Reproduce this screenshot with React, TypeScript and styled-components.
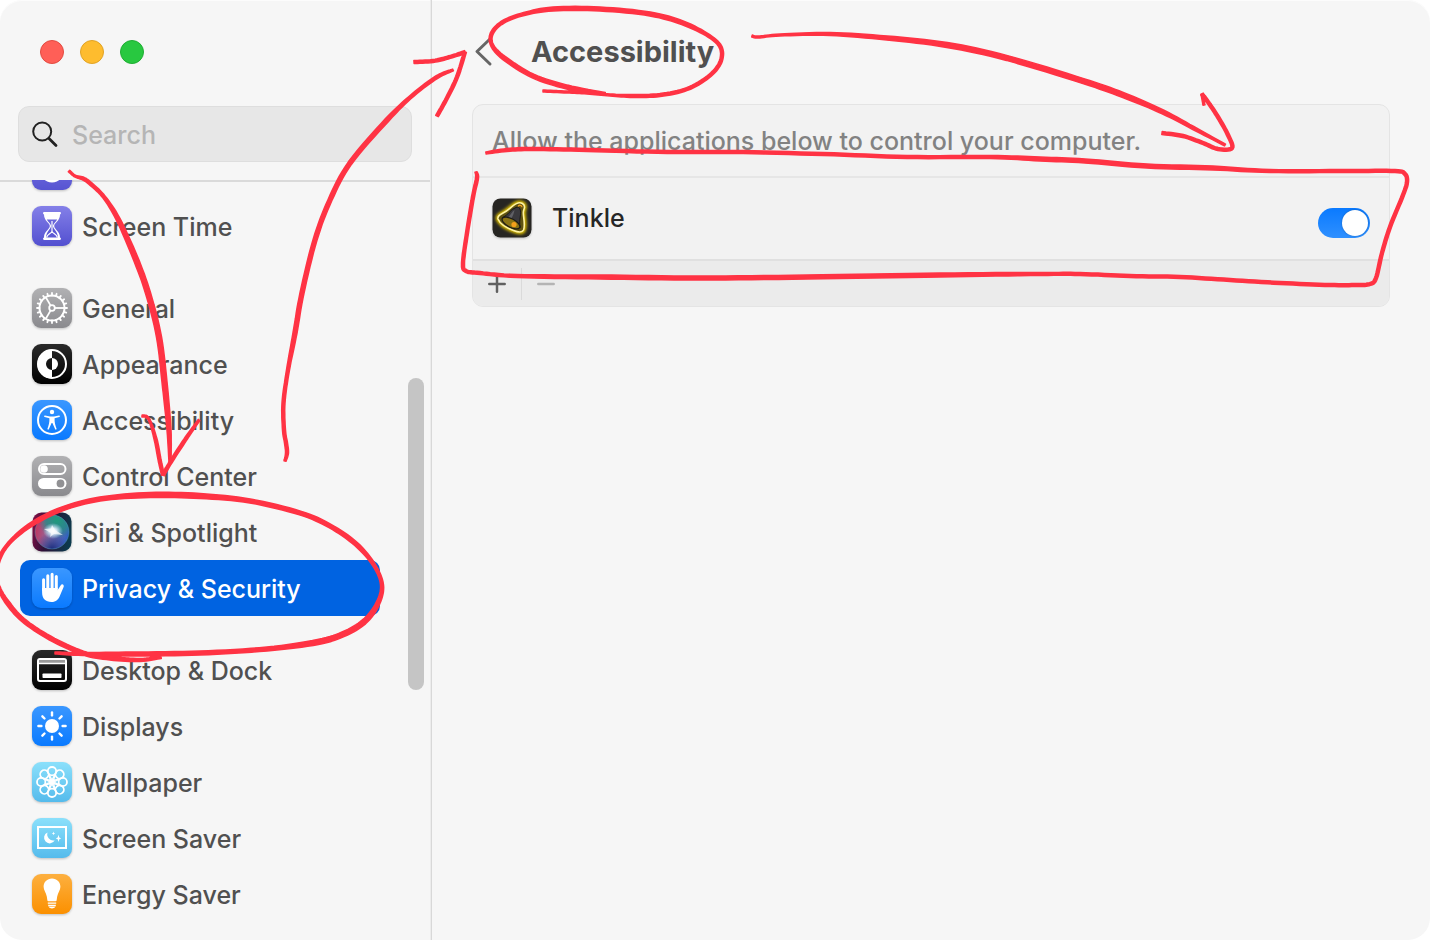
import React, { useId } from "react";
import styled, { createGlobalStyle, css } from "styled-components";

const GlobalStyle = createGlobalStyle`
  *, *::before, *::after { box-sizing: border-box; }
  body {
    margin: 0;
    background: #ffffff;
    font-family: Inter, "Liberation Sans", sans-serif;
    font-size: 25px;
    font-weight: 450;
    line-height: 32px;
    color: #505050;
    -webkit-font-smoothing: antialiased;
  }
  h1, p, ul { margin: 0; padding: 0; }
`;

const Window = styled.div`
  position: relative;
  display: flex;
  height: 100vh;
  min-height: 600px;
  border-radius: 22px;
  overflow: hidden;
  background: #f6f6f6;
  box-shadow: inset 0 1px 0 #fcfcfc;
`;

/* Sidebar */

const Sidebar = styled.aside`
  flex: 0 0 432px;
  display: flex;
  flex-direction: column;
  padding-right: 1px;
  border-right: 1px solid #d8d8d8;
  box-shadow: inset -1px 0 0 #ececec;
`;

const SidebarHeader = styled.header`
  padding: 40px 18px 18px;
  display: flex;
  flex-direction: column;
  gap: 42px;
`;

const TrafficLights = styled.div`
  display: flex;
  gap: 16px;
  padding-left: 22px;
`;

const Light = styled.button<{ $fill: string; $edge: string }>`
  width: 24px;
  height: 24px;
  padding: 0;
  border-radius: 50%;
  border: 1px solid ${(p) => p.$edge};
  background: ${(p) => p.$fill};
`;

const SearchBox = styled.label`
  display: flex;
  align-items: center;
  gap: 13px;
  width: 394px;
  height: 56px;
  padding: 0 12px;
  border: 1px solid #dedede;
  border-radius: 11px;
  background: #e7e7e7;
`;

const SearchInput = styled.input`
  flex: 1;
  min-width: 0;
  padding: 2px 0 0;
  border: 0;
  outline: 0;
  background: transparent;
  font: inherit;
  color: #262626;
  &::placeholder { color: #b5b5b5; opacity: 1; }
`;

const ListArea = styled.nav`
  position: relative;
  flex: 1;
  min-height: 0;
  overflow: hidden;
  background: linear-gradient(#dadada, #dadada) top / 100% 2px no-repeat;
`;

const List = styled.ul`
  list-style: none;
  margin-top: -38px;
  padding: 0 50px 0 20px;
  display: flex;
  flex-direction: column;
  gap: 26px;
`;

const Group = styled.ul`
  list-style: none;
`;

const ItemLink = styled.a<{ $selected?: boolean }>`
  display: flex;
  align-items: center;
  gap: 10px;
  height: 56px;
  padding: 0 12px;
  border-radius: 10px;
  color: inherit;
  text-decoration: none;
  white-space: nowrap;
  ${(p) => p.$selected && css`
    background: #0063e1;
    color: #ffffff;
  `}
`;

const ItemName = styled.span`
  padding-top: 2px;
`;

const Tile = styled.svg`
  flex: none;
  display: block;
  width: 40px;
  height: 40px;
  overflow: visible;
  filter: drop-shadow(0 1px 1px rgba(0, 0, 0, 0.22));
`;

const ScrollThumb = styled.div`
  position: absolute;
  top: 198px;
  right: 6px;
  width: 16px;
  height: 312px;
  border-radius: 8px;
  background: #c5c5c5;
`;

/* Main pane */

const Main = styled.main`
  flex: 1;
  min-width: 0;
  padding: 0 40px;
`;

const TitleBar = styled.header`
  display: flex;
  align-items: center;
  gap: 36px;
  height: 104px;
`;

const BackButton = styled.button`
  display: block;
  width: 23px;
  height: 32px;
  padding: 0;
  border: 0;
  background: none;
  svg { display: block; }
`;

const Title = styled.h1`
  font-size: 29px;
  line-height: 36px;
  font-weight: 650;
`;

const Panel = styled.section`
  border: 1px solid #e4e4e4;
  border-radius: 11px;
  background: #f2f2f2;
  overflow: hidden;
`;

const PanelIntro = styled.p`
  height: 73px;
  padding: 20px 19px;
  border-bottom: 2px solid #e6e6e6;
  color: #828282;
`;

const AppRow = styled.label`
  display: flex;
  align-items: center;
  gap: 20px;
  padding: 20px 19px 21px;
  border-bottom: 2px solid #e0e0e0;
  color: #262626;
`;

const AppName = styled.span`
  flex: 1;
`;

const Switch = styled.input`
  appearance: none;
  align-self: flex-end;
  display: flex;
  justify-content: flex-start;
  width: 52px;
  height: 30px;
  margin: 0;
  padding: 2px;
  border-radius: 15px;
  background: #cfcfcf;
  &::before {
    content: "";
    width: 26px;
    height: 26px;
    border-radius: 50%;
    background: #ffffff;
    box-shadow: 0 0 2px rgba(0, 0, 0, 0.3);
  }
  &:checked {
    justify-content: flex-end;
    background: linear-gradient(#0a7aff, #2f90ff);
  }
`;

const PanelFooter = styled.div`
  display: flex;
  align-items: center;
  height: 45px;
  background: #ebebeb;
`;

const FooterButton = styled.button<{ $tone: string }>`
  display: flex;
  align-items: center;
  justify-content: center;
  width: 48px;
  height: 32px;
  padding: 0;
  border: 0;
  background: none;
  color: ${(p) => p.$tone};
  & + & { border-left: 1px solid #dadada; }
`;

const Markup = styled.svg`
  position: absolute;
  top: 0;
  left: 0;
  width: 100%;
  height: auto;
  pointer-events: none;
`;

/* Icons */

type TileProps = { from: string; to: string; children?: React.ReactNode };

function IconTile({ from, to, children }: TileProps) {
  const id = useId();
  return (
    <Tile viewBox="0 0 40 40" aria-hidden="true">
      <defs>
        <linearGradient id={id} x1="0" y1="0" x2="0" y2="1">
          <stop offset="0" stopColor={from} />
          <stop offset="1" stopColor={to} />
        </linearGradient>
      </defs>
      <rect width="40" height="40" rx="9" fill={`url(#${id})`} />
      {children}
    </Tile>
  );
}

const around = (n: number, draw: (angle: number) => React.ReactNode) =>
  Array.from({ length: n }, (_, i) => draw((360 / n) * i));

const FocusIcon = () => (
  <IconTile from="#7d79e6" to="#5754d2">
    <circle cx="20" cy="20" r="12.500" fill="#fff" />
  </IconTile>
);

const ScreenTimeIcon = () => (
  <IconTile from="#8480e8" to="#5350d0">
    <path
      d="M12 6h16c1.300 0 1.300 2.300 0 2.400C28 15 22.200 16.500 22.200 20S28 25 28 31.600c1.300.1 1.300 2.400 0 2.400H12c-1.300 0-1.300-2.300 0-2.400C12 25 17.800 23.500 17.800 20S12 15 12 8.400C10.700 8.300 10.700 6 12 6Z"
      fill="#fff"
    />
    <path d="M14.800 13.500h10.400c-1.300 2.600-3.800 3.700-4.300 6.500h-1.800c-.5-2.800-3-3.900-4.300-6.500Z" fill="#6a66da" />
    <path d="M19.100 20h1.800c.6 3.700 4.700 5 5.100 11.500H14c.4-6.500 4.500-7.800 5.100-11.500Z" fill="#5d5ad5" />
    <path d="M20 15v11.500" stroke="#fff" strokeWidth="1.200" />
    <path d="M14.500 31.500c.8-3 3.500-3.700 5.500-5.700 2 2 4.700 2.700 5.500 5.700" fill="none" stroke="#fff" strokeWidth="1.200" />
  </IconTile>
);

const GeneralIcon = () => (
  <IconTile from="#b1b1b3" to="#8a8a8e">
    <g stroke="#fff" fill="none">
      <circle cx="20" cy="20" r="12.500" strokeWidth="2" />
      {around(20, (a) => (
        <path key={a} d="M20 7.500V5" strokeWidth="1.800" strokeLinecap="round" transform={`rotate(${a} 20 20)`} />
      ))}
      <circle cx="20" cy="20" r="2.800" strokeWidth="1.800" />
      {around(3, (a) => (
        <path key={a} d="M23 20h9" strokeWidth="1.800" transform={`rotate(${a} 20 20)`} />
      ))}
    </g>
  </IconTile>
);

const AppearanceIcon = () => (
  <IconTile from="#2a2a2a" to="#000000">
    <circle cx="20" cy="20" r="14" fill="none" stroke="#fff" strokeWidth="2" />
    <path d="M20 5.500a14.500 14.500 0 0 0 0 29v-8.500a6 6 0 0 1 0-12Z" fill="#fff" />
    <path d="M20 14a6 6 0 0 1 0 12Z" fill="#fff" />
  </IconTile>
);

const AccessibilityIcon = () => (
  <IconTile from="#3a97ff" to="#0a7aff">
    <circle cx="20" cy="20" r="14" fill="none" stroke="#fff" strokeWidth="2" />
    <circle cx="20" cy="12" r="2.200" fill="#fff" />
    <path
      d="M13 15.400 18 16.500h4l5-1.100c1-.2 1.300 1.200.3 1.500L22.600 18.300c-.3 3.500.8 7.400 1.900 10.300.4 1-.9 1.500-1.400.5L20.400 23h-.8l-2.700 6.100c-.5 1-1.800.5-1.400-.5 1.100-2.900 2.200-6.800 1.900-10.300L12.700 16.900c-1-.3-.7-1.700.3-1.500Z"
      fill="#fff"
    />
  </IconTile>
);

const ControlCenterIcon = () => (
  <IconTile from="#b1b1b3" to="#8a8a8e">
    <rect x="7" y="8" width="26.500" height="10" rx="5" fill="none" stroke="#fff" strokeWidth="2" />
    <circle cx="12" cy="13" r="3.800" fill="#fff" />
    <rect x="6" y="22" width="28.500" height="11" rx="5.500" fill="#fff" />
    <circle cx="28.500" cy="27.500" r="3.900" fill="#919194" />
  </IconTile>
);

function SiriIcon() {
  const id = useId();
  return (
    <Tile viewBox="0 0 40 40" aria-hidden="true">
      <defs>
        <linearGradient id={`${id}b`} x1="0" y1="0.300" x2="1" y2="0.500">
          <stop offset="0" stopColor="#7c0f45" />
          <stop offset="0.400" stopColor="#2c1038" />
          <stop offset="1" stopColor="#0c3a4c" />
        </linearGradient>
        <linearGradient id={`${id}o`} x1="0" y1="0.400" x2="1" y2="0.600">
          <stop offset="0" stopColor="#c2355f" />
          <stop offset="0.450" stopColor="#8d6fa0" />
          <stop offset="1" stopColor="#2c5fc4" />
        </linearGradient>
        <radialGradient id={`${id}g`} cx="0.650" cy="0.150" r="0.550">
          <stop offset="0" stopColor="#1d9b7c" />
          <stop offset="0.600" stopColor="#268a86" stopOpacity="0.800" />
          <stop offset="1" stopColor="#268a86" stopOpacity="0" />
        </radialGradient>
        <radialGradient id={`${id}d`} cx="0.500" cy="1" r="0.500">
          <stop offset="0" stopColor="#1b2d7c" />
          <stop offset="1" stopColor="#2a3f9c" stopOpacity="0" />
        </radialGradient>
        <radialGradient id={`${id}w`}>
          <stop offset="0" stopColor="#fff" />
          <stop offset="0.350" stopColor="#e9f3ff" stopOpacity="0.900" />
          <stop offset="1" stopColor="#bfe0ff" stopOpacity="0" />
        </radialGradient>
      </defs>
      <rect width="39" height="39" x="0.500" y="0.500" rx="9" fill={`url(#${id}b)`} />
      <circle cx="20" cy="20" r="17" fill={`url(#${id}o)`} />
      <circle cx="20" cy="20" r="17" fill={`url(#${id}g)`} />
      <circle cx="20" cy="20" r="17" fill={`url(#${id}d)`} />
      <circle cx="20" cy="20" r="17" fill="none" stroke="#4aa3b8" strokeOpacity="0.400" />
      <ellipse cx="21" cy="19" rx="10" ry="8" fill={`url(#${id}w)`} />
      <path d="M20 13 23 18l8 5-9-1-4 3 1-4-7-4 7-.5Z" fill="#fff" fillOpacity="0.700" />
    </Tile>
  );
}

const PrivacyIcon = () => (
  <IconTile from="#3a97ff" to="#0a7aff">
    <g stroke="#fff" strokeLinecap="round" strokeLinejoin="round" fill="none">
      <path d="M11.600 22V11.700M15.800 20V7.700M20.100 20V6.300M24.300 20V8.500" strokeWidth="3" />
      <path d="m25.500 25 4.700-7.200" strokeWidth="3" />
    </g>
    <path d="M10.100 20h15.700v2.500l4.300-5 1.700 1L28 27.500c-1.500 4-4 6.500-8.500 6.500-6 0-9.400-3.500-9.400-9.500Z" fill="#fff" />
  </IconTile>
);

const DesktopIcon = () => (
  <IconTile from="#2a2a2a" to="#000000">
    <rect x="6" y="9" width="28" height="22" rx="2" fill="none" stroke="#fff" strokeWidth="2" />
    <path d="M7 11.500h26" stroke="#9a9a9a" strokeWidth="3" />
    <path d="M6 13.500h28" stroke="#fff" strokeWidth="1.500" />
    <rect x="10.500" y="23.500" width="19" height="4.500" rx="0.800" fill="#fff" />
  </IconTile>
);

const DisplaysIcon = () => (
  <IconTile from="#3a97ff" to="#0a7aff">
    <circle cx="20" cy="20" r="7" fill="#fff" />
    {around(8, (a) => (
      <path key={a} d="M20 9.400V6.400" stroke="#fff" strokeWidth="2.400" strokeLinecap="round" transform={`rotate(${a} 20 20)`} />
    ))}
  </IconTile>
);

const WallpaperIcon = () => (
  <IconTile from="#8be0fb" to="#55bbec">
    <g fill="none" stroke="#fff" strokeWidth="1.800">
      {around(8, (a) => (
        <g key={a} transform={`rotate(${a} 20 20)`}>
          <circle cx="20" cy="9.200" r="4.200" />
          <path d="m16.400 11.400 4.600 8.600M23.600 11.400 19 20" strokeWidth="1.400" />
        </g>
      ))}
    </g>
  </IconTile>
);

const ScreenSaverIcon = () => (
  <IconTile from="#8be0fb" to="#55bbec">
    <rect x="6" y="9" width="28" height="21" fill="none" stroke="#fff" strokeWidth="2" />
    <path d="M15.500 14.600a5.600 5.600 0 1 0 7.200 7.600 6 6 0 0 1-7.200-7.600Z" fill="#fff" />
    <path d="m26.500 16.800.8 2.800 1.900.8-1.900.8-.8 2.800-.8-2.800-1.900-.8 1.900-.8ZM21.500 13.500l.5 1.400 1.300.5-1.300.5-.5 1.400-.5-1.400-1.300-.5 1.300-.5Z" fill="#fff" />
  </IconTile>
);

const EnergyIcon = () => (
  <IconTile from="#fdb040" to="#fb9000">
    <path
      d="M20 4.500c-4.900 0-8.400 3.600-8.400 8.300 0 3.600 2.600 5.900 3.200 9.800l.6 3.900c.1.500.4.700.9.700h7.400c.5 0 .8-.2.900-.7l.6-3.900c.6-3.900 3.200-6.200 3.200-9.800 0-4.700-3.500-8.300-8.400-8.300Z"
      fill="#fff"
    />
    <path d="M15.800 28.500h8.400v1.200h-8.400ZM16 30.700h8l-.5 1.700h-7ZM17 33h6c-.4 1-1.600 1.400-3 1.400s-2.600-.4-3-1.400Z" fill="#fff" />
  </IconTile>
);

function TinkleIcon() {
  const id = useId();
  return (
    <Tile viewBox="0 0 40 40" aria-hidden="true">
      <defs>
        <filter id={id} x="-20%" y="-20%" width="140%" height="140%">
          <feGaussianBlur stdDeviation="1.400" />
        </filter>
      </defs>
      <rect width="39" height="39" x="0.500" y="0.500" rx="8" fill="#262522" />
      <g fill="none" strokeLinejoin="round">
        <path
          d="M26 5c3-1 6.500 1 6.500 4 0 2-1.300 3-1.200 6 .2 6 2.200 12 .2 17-1.500 3.500-6 2-10 .5C15 30 8 26 6 21c-1-3.500 3-5 6-6.500C17 12 21 6.500 26 5Z"
          stroke="#e8c800"
          strokeWidth="4.500"
          filter={`url(#${id})`}
        />
        <path
          d="M26 5c3-1 6.500 1 6.500 4 0 2-1.300 3-1.200 6 .2 6 2.200 12 .2 17-1.500 3.500-6 2-10 .5C15 30 8 26 6 21c-1-3.500 3-5 6-6.500C17 12 21 6.500 26 5Z"
          stroke="#fff3a0"
          strokeWidth="1.600"
          fill="#5f5310"
        />
      </g>
      <path d="M10.500 19.500C16 18 18 11 24 9.500c1.500-1 3.500-.2 4 1.500 2 5-1.500 10 .2 18.500Z" fill="#3a393d" stroke="#19181a" strokeWidth="1" />
      <path d="M22.500 12c-2.500 1.500-4 5-6.500 7.500l3 1.500c2-3 3-6 3.500-9Z" fill="#606066" />
      <ellipse cx="19" cy="25" rx="9.800" ry="4.300" transform="rotate(28 19 25)" fill="#8b7414" stroke="#1e1c18" strokeWidth="1.200" />
      <circle cx="22" cy="26.500" r="2.600" fill="#f5a01c" />
      <path d="M26 8.500c1-2 4-1.500 4 .8" stroke="#f0a020" strokeWidth="1.300" fill="none" />
    </Tile>
  );
}

const SearchIcon = () => (
  <svg width="28" height="28" viewBox="0 0 28 28" fill="none" stroke="#222" strokeLinecap="round" aria-hidden="true">
    <circle cx="11.200" cy="11.500" r="9" strokeWidth="2" />
    <path d="m18 18.500 7 7" strokeWidth="2.800" />
  </svg>
);

/* Hand-drawn strokes: each point is x, y and pen width. */

type Pt = [number, number, number];

const strokes: Pt[][] = [
  [[69,171,3],[75,176,3],[84,179,4],[92,185,4],[104,197,4],[118,219,5],[135,257,6],[148,293,6],[159,337,6],[165,387,6],[169,430,5],[170,463,3]],
  [[142,416,3],[147,417,3],[151,424,3],[156,441,4],[160,462,4],[163,475,4]],
  [[163,475,4],[172,460,4],[185,440,4],[199,420,3]],
  [[285,461,3],[287,453,4],[286,443,4],[284,430,4],[283.500,403,4],[288,370,4],[295,333,5],[302,293,5],[315,240,5],[330,200,5],[350,163,5],[387,120,5],[413,95,4],[437,77,4],[453,70,3]],
  [[414,62,4],[433,61,4],[450,57,4],[465,52,4]],
  [[465,52,4],[457,77,4],[447,98,4],[437,116,4]],
  [[161,657,4],[140,660,4],[110,658,5],[83,653,5],[50,638,5],[23,620,5],[7,602,5],[-1,588,4],[-4,575,4],[0,557,4],[11,541,4],[32,524,5],[62,509,5],[100,499,5],[150,495,6],[200,496,6],[250,501,5],[300,513,5],[330,526,5],[356,544,5],[374,565,4],[382,585,4],[378,603,5],[366,620,6],[346,633,6],[318,642,6],[267,649,5],[200,653,5],[133,654,5],[83,654,4],[55,653,3]],
  [[543,91,3],[567,92,3],[587,93,3],[610,95,3],[633,96,4],[660,95,4],[687,89,4],[708,77,4],[720,63,4],[721,48,4],[709,36,4],[683,23,5],[650,14,5],[600,9,5],[553,9,5],[524,14,4],[503,22,4],[492,33,4],[492,45,4],[504,58,5],[533,76,5],[567,87,5],[605,94,4]],
  [[752,36,3],[758,37,3],[780,35,3],[830,34,4],[887,38,5],[947,45,6],[1007,58,6],[1083,81,6],[1123,95,6],[1163,112,5],[1197,130,4],[1225,145,3]],
  [[1162,133,4],[1183,136,4],[1203,143,4],[1218,149,4],[1232,148,4],[1228,135,4],[1218,117,4],[1208,102,4],[1202,94,4]],
  [[1202,94,3],[1204,105,3]],
  [[486,153,3],[507,150,4],[533,149,4],[587,150,4],[667,152,4],[733,152,4],[823,154,4],[907,157,4],[990,157,4],[1040,159,5],[1085,161,5],[1147,166,5],[1213,168,5],[1270,171,4],[1347,171,4],[1395,171,4],[1405,174,4],[1407,182,4],[1403,195,4],[1390,227,4],[1382,253,4],[1376,278,4],[1370,284,4],[1357,285,4],[1330,285,4],[1280,283,4],[1230,280,4],[1180,277,4],[1130,276,4],[1080,274,4],[1040,274,4],[940,275,5],[807,277,5],[700,278,5],[600,277,5],[517,276,4],[480,273,4],[466,271,4],[463,263,4],[467,233,4],[473,197,4],[477,178,4],[476,172,3]],
];

/* Catmull-Rom sampling, widened on both sides into one closed outline. */
function penOutline(points: Pt[]): string {
  const samples: Pt[] = [];
  const at = (i: number) => points[Math.max(0, Math.min(points.length - 1, i))];
  for (let i = 0; i < points.length - 1; i++) {
    const [a, b, c, d] = [at(i - 1), at(i), at(i + 1), at(i + 2)];
    for (let k = 0; k < 8; k++) {
      const t = k / 8;
      samples.push(
        [0, 1, 2].map((n) =>
          0.5 * (2 * b[n] + (c[n] - a[n]) * t + (2 * a[n] - 5 * b[n] + 4 * c[n] - d[n]) * t * t +
            (3 * b[n] - a[n] - 3 * c[n] + d[n]) * t * t * t),
        ) as Pt,
      );
    }
  }
  samples.push(points[points.length - 1]);
  const left: string[] = [];
  const right: string[] = [];
  samples.forEach(([x, y, w], i) => {
    const p = samples[Math.max(0, i - 1)];
    const q = samples[Math.min(samples.length - 1, i + 1)];
    const len = Math.hypot(q[0] - p[0], q[1] - p[1]) || 1;
    const nx = (-(q[1] - p[1]) / len) * ((w - 1) / 2);
    const ny = ((q[0] - p[0]) / len) * ((w - 1) / 2);
    left.push(`${(x + nx).toFixed(1)} ${(y + ny).toFixed(1)}`);
    right.unshift(`${(x - nx).toFixed(1)} ${(y - ny).toFixed(1)}`);
  });
  return `M${left.concat(right).join("L")}Z`;
}

const groups = [
  [
    { name: "Focus", Icon: FocusIcon },
    { name: "Screen Time", Icon: ScreenTimeIcon },
  ],
  [
    { name: "General", Icon: GeneralIcon },
    { name: "Appearance", Icon: AppearanceIcon },
    { name: "Accessibility", Icon: AccessibilityIcon },
    { name: "Control Center", Icon: ControlCenterIcon },
    { name: "Siri & Spotlight", Icon: SiriIcon },
    { name: "Privacy & Security", Icon: PrivacyIcon },
  ],
  [
    { name: "Desktop & Dock", Icon: DesktopIcon },
    { name: "Displays", Icon: DisplaysIcon },
    { name: "Wallpaper", Icon: WallpaperIcon },
    { name: "Screen Saver", Icon: ScreenSaverIcon },
    { name: "Energy Saver", Icon: EnergyIcon },
  ],
];

export default function App() {
  const selected = "Privacy & Security";
  return (
    <>
      <GlobalStyle />
      <Window>
        <Sidebar>
          <SidebarHeader>
            <TrafficLights>
              <Light $fill="#ff5f57" $edge="#e24b41" aria-label="Close" />
              <Light $fill="#febc2e" $edge="#e1a325" aria-label="Minimize" />
              <Light $fill="#28c840" $edge="#1fae33" aria-label="Zoom" />
            </TrafficLights>
            <SearchBox>
              <SearchIcon />
              <SearchInput type="search" placeholder="Search" aria-label="Search" />
            </SearchBox>
          </SidebarHeader>
          <ListArea aria-label="Settings">
            <List>
              {groups.map((items) => (
                <li key={items[0].name}>
                  <Group>
                    {items.map(({ name, Icon }) => (
                      <li key={name}>
                        <ItemLink
                          href="#"
                          $selected={name === selected}
                          aria-current={name === selected ? "page" : undefined}
                        >
                          <Icon />
                          <ItemName>{name}</ItemName>
                        </ItemLink>
                      </li>
                    ))}
                  </Group>
                </li>
              ))}
            </List>
            <ScrollThumb />
          </ListArea>
        </Sidebar>
        <Main>
          <TitleBar>
            <BackButton aria-label="Back">
              <svg width="23" height="32" viewBox="0 0 23 32" fill="none" stroke="#666" strokeWidth="3" strokeLinecap="round" strokeLinejoin="round">
                <path d="M18 3 5 15.500 18 28" />
              </svg>
            </BackButton>
            <Title>Accessibility</Title>
          </TitleBar>
          <Panel>
            <PanelIntro>Allow the applications below to control your computer.</PanelIntro>
            <AppRow>
              <TinkleIcon />
              <AppName>Tinkle</AppName>
              <Switch type="checkbox" role="switch" defaultChecked />
            </AppRow>
            <PanelFooter>
              <FooterButton $tone="#606060" aria-label="Add">
                <svg width="18" height="18" viewBox="0 0 18 18" stroke="currentColor" strokeWidth="2.500" strokeLinecap="round">
                  <path d="M1.300 9h15.400M9 1.300v15.400" />
                </svg>
              </FooterButton>
              <FooterButton $tone="#b4b4b4" aria-label="Remove">
                <svg width="18" height="18" viewBox="0 0 18 18" stroke="currentColor" strokeWidth="2.500" strokeLinecap="round">
                  <path d="M1.300 9h15.400" />
                </svg>
              </FooterButton>
            </PanelFooter>
          </Panel>
        </Main>
        <Markup viewBox="0 0 1430 940" aria-hidden="true" fill="#ff3344" stroke="#ff3344" strokeWidth="1.500" strokeLinejoin="round">
          {strokes.map((points, i) => (
            <path key={i} d={penOutline(points)} />
          ))}
        </Markup>
      </Window>
    </>
  );
}
